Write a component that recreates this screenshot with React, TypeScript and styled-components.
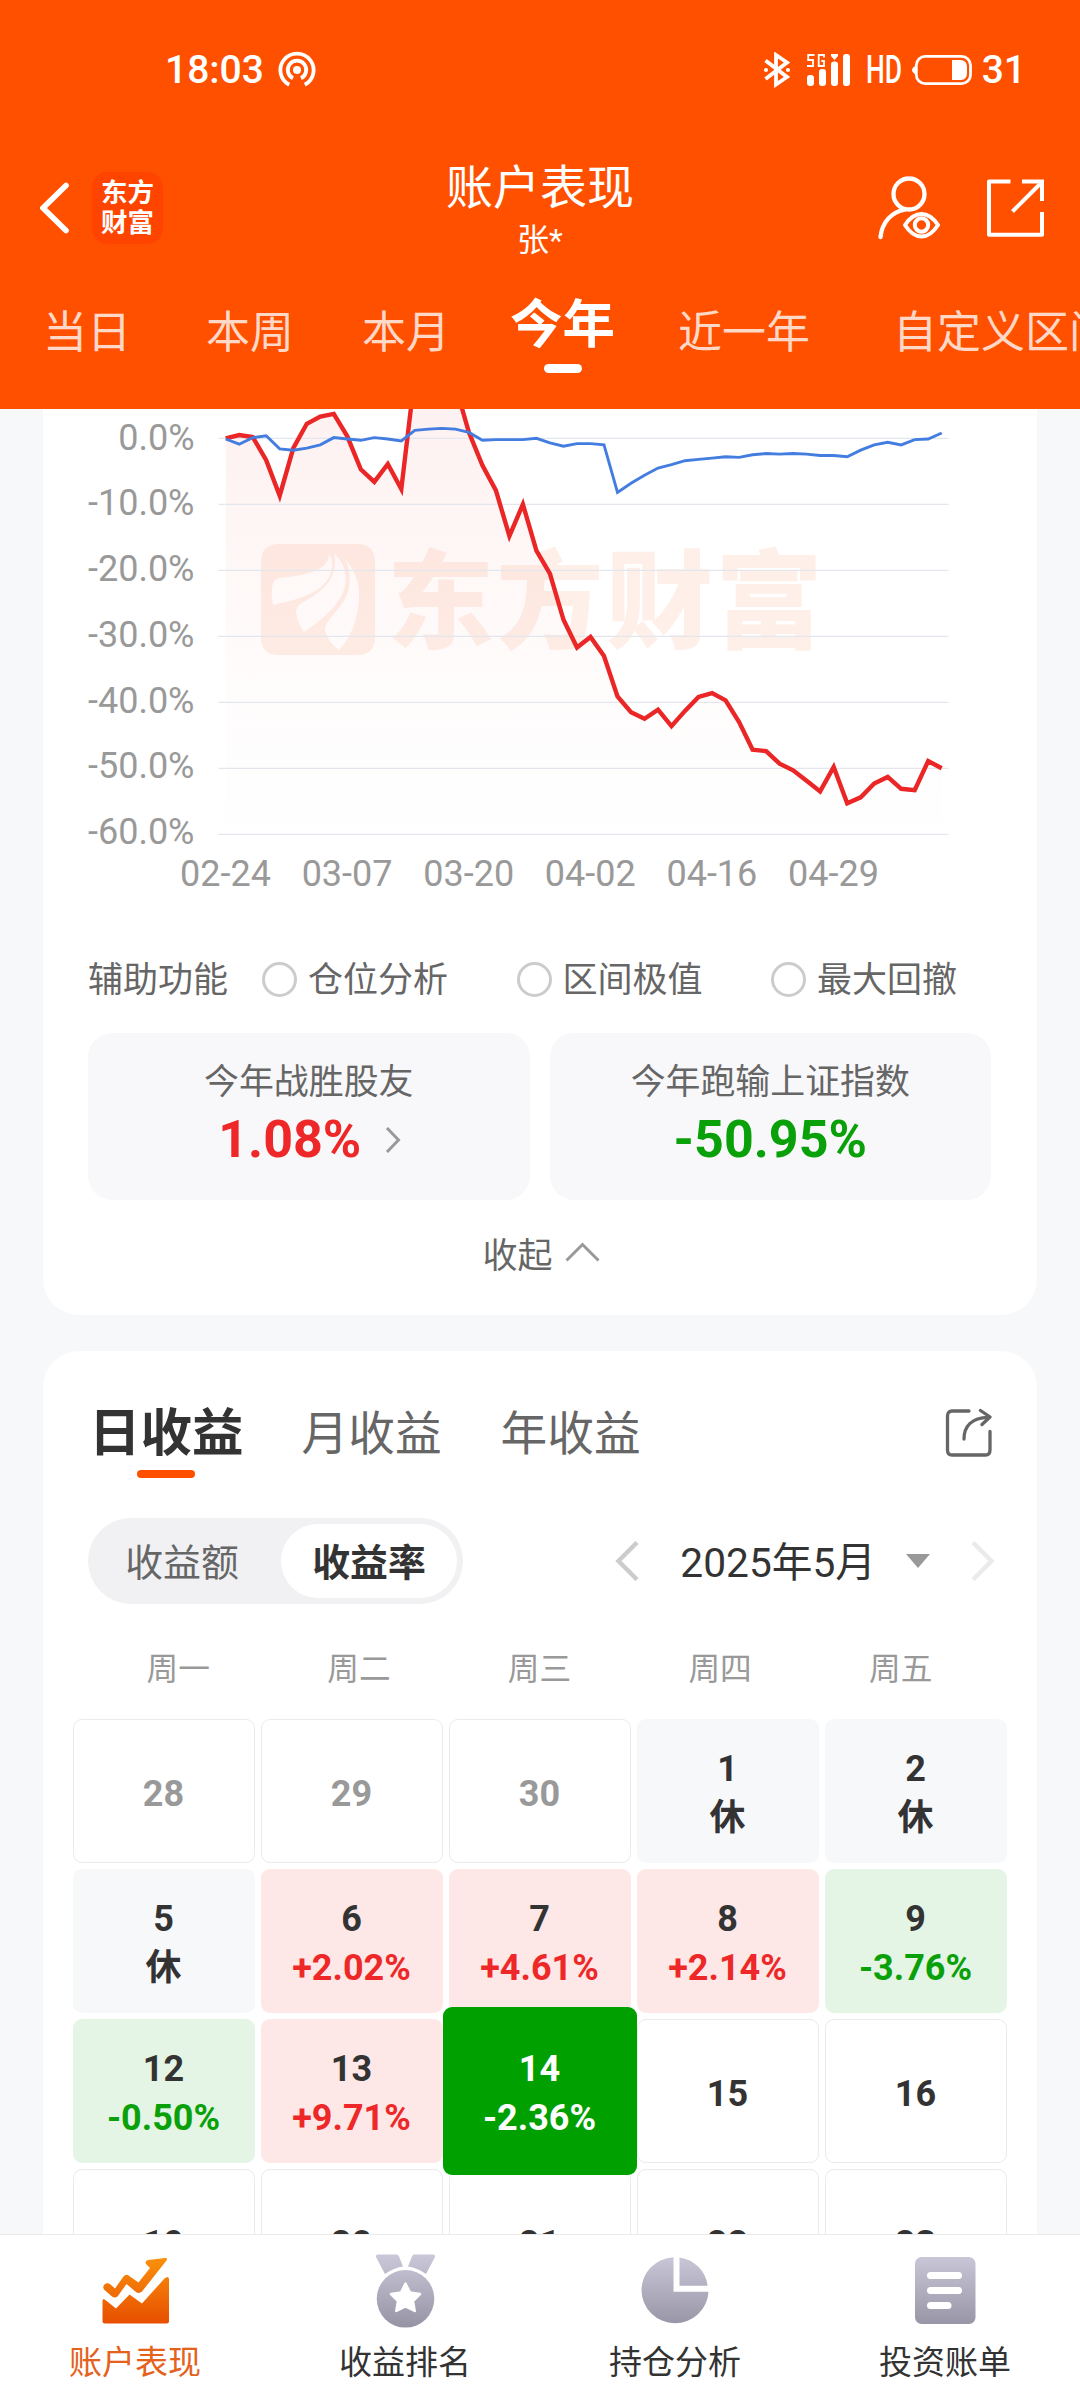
import React from 'react';
import styled, { createGlobalStyle, css } from 'styled-components';

const GlobalStyle = createGlobalStyle`
  * { box-sizing: border-box; }
  body {
    margin: 0;
    background: #f7f8fa;
    font-family: Roboto, "Noto Sans CJK SC", sans-serif;
    color: #333;
  }
`;

const Screen = styled.div`
  width: 1080px;
  height: 2400px;
  display: flex;
  flex-direction: column;
  overflow: hidden;
  background: #f7f8fa;
`;

/* ---------- header ---------- */

const Header = styled.header`
  flex: none;
  height: 409px;
  background: #ff5000;
  color: #fff;
  overflow: hidden;
`;

const StatusBar = styled.div`
  height: 140px;
  padding: 0 54px 0 165px;
  display: flex;
  align-items: center;
  justify-content: space-between;
`;

const StatusGroup = styled.div<{ $gap: number }>`
  display: flex;
  align-items: center;
  gap: ${(p) => p.$gap}px;
`;

const StatusText = styled.span`
  font-size: 39px;
  font-weight: 500;
  line-height: 46px;
`;

const HdText = styled(StatusText)`
  display: inline-block;
  width: 36px;
  white-space: nowrap;
  transform: scaleX(0.68);
  transform-origin: left center;
`;

const TitleBar = styled.div`
  height: 136px;
  padding: 0 36px 0 40px;
  display: grid;
  grid-template-columns: 1fr auto 1fr;
  align-items: center;
`;

const TitleLeft = styled.div`
  display: flex;
  align-items: center;
  gap: 23px;
`;

const BrandBadge = styled.div`
  width: 71px;
  height: 72px;
  border-radius: 15px;
  background: #ff4400;
  display: flex;
  flex-direction: column;
  align-items: center;
  justify-content: center;
  font-size: 26.5px;
  line-height: 30px;
  font-weight: 700;
`;

const TitleCenter = styled.div`
  align-self: start;
  padding-top: 21px;
  margin-left: -4px;
  text-align: center;
`;

const Title = styled.h1`
  margin: 0;
  font-size: 47px;
  font-weight: 400;
  line-height: 54px;
`;

const Subtitle = styled.div`
  font-size: 32px;
  line-height: 50px;
`;

const TitleRight = styled.div`
  display: flex;
  align-items: center;
  justify-content: flex-end;
  gap: 46px;
`;

const RangeTabs = styled.nav`
  display: flex;
  align-items: flex-start;
  padding-left: 43px;
  white-space: nowrap;
`;

const RangeTab = styled.div<{ $gap: number; $active?: boolean }>`
  flex: none;
  margin-left: ${(p) => p.$gap}px;
  padding-top: 27px;
  font-size: 44px;
  line-height: 60px;
  color: rgba(255, 255, 255, 0.78);
  ${(p) =>
    p.$active &&
    css`
      padding-top: 19px;
      font-size: 52.5px;
      font-weight: 700;
      color: #fff;
      &::after {
        content: '';
        display: block;
        width: 38px;
        height: 9px;
        margin: 9px auto 0;
        border-radius: 5px;
        background: #fff;
      }
    `}
`;

/* ---------- cards ---------- */

const Content = styled.main`
  flex: 1;
  min-height: 0;
  overflow: hidden;
  padding: 0 43px;
  display: flex;
  flex-direction: column;
  gap: 36px;
`;

const ChartCard = styled.section`
  flex: none;
  height: 906px;
  background: #fff;
  border-radius: 0 0 36px 36px;
`;

const ChartSvg = styled.svg`
  display: block;
`;

const OptionRow = styled.div`
  height: 60px;
  margin-top: 42px;
  padding-left: 45px;
  display: flex;
  align-items: center;
  font-size: 35px;
  line-height: 60px;
  color: #666;
`;

const OptionLabel = styled.span`
  width: 174px;
`;

const Option = styled.label`
  width: 254.5px;
  display: flex;
  align-items: center;
  gap: 11px;
`;

const RadioRing = styled.i`
  width: 35px;
  height: 35px;
  margin-bottom: 3px;
  border: 3px solid #ccc;
  border-radius: 50%;
`;

const StatRow = styled.div`
  display: grid;
  grid-template-columns: 1fr 1fr;
  gap: 20px;
  padding: 22px 46px 0 45px;
`;

const StatBox = styled.div`
  height: 167px;
  border-radius: 24px;
  background: #f8f8fa;
  padding-top: 25px;
  text-align: center;
`;

const StatLabel = styled.div`
  font-size: 34.9px;
  line-height: 50px;
  color: #666;
`;

const StatValue = styled.div<{ $color: string }>`
  display: flex;
  justify-content: center;
  align-items: center;
  gap: 24px;
  font-size: 52px;
  font-weight: 700;
  line-height: 64px;
  color: ${(p) => p.$color};
`;

const StatChevron = styled.svg`
  margin-right: -2px;
`;

const Collapse = styled.button`
  display: flex;
  align-items: center;
  justify-content: center;
  gap: 12px;
  width: 100%;
  height: 60px;
  margin-top: 22px;
  padding: 0 0 0 2px;
  border: 0;
  background: none;
  font: inherit;
  font-size: 35px;
  color: #666;
`;

/* ---------- calendar ---------- */

const CalendarCard = styled.section`
  flex: none;
  height: 1080px;
  background: #fff;
  border-radius: 36px;
`;

const PeriodRow = styled.div`
  display: flex;
  align-items: flex-start;
  padding: 51px 45px 0 46px;
`;

const PeriodTab = styled.div<{ $active?: boolean }>`
  margin-right: 59px;
  font-size: 46.7px;
  line-height: 64px;
  color: #666;
  ${(p) =>
    p.$active &&
    css`
      margin-right: 58px;
      font-size: 51.5px;
      font-weight: 700;
      color: #333;
      &::after {
        content: '';
        display: block;
        width: 58px;
        height: 8px;
        margin: 4px auto 0;
        border-radius: 4px;
        background: #ff5000;
      }
    `}
`;

const ShareSlot = styled.div`
  margin-left: auto;
  padding-top: 6px;
  line-height: 0;
`;

const ControlRow = styled.div`
  display: flex;
  align-items: center;
  justify-content: space-between;
  padding: 0 42px 0 45px;
  margin-top: 40px;
`;

const Segmented = styled.div`
  width: 375px;
  height: 86px;
  padding: 6px;
  border-radius: 43px;
  background: #f1f1f3;
  display: flex;
`;

const Segment = styled.div<{ $active?: boolean }>`
  width: ${(p) => (p.$active ? 176 : 187)}px;
  height: 74px;
  padding-top: 1px;
  padding-right: ${(p) => (p.$active ? 0 : 11)}px;
  border-radius: 37px;
  text-align: center;
  font-size: 37.9px;
  line-height: 76px;
  font-weight: ${(p) => (p.$active ? 700 : 400)};
  color: ${(p) => (p.$active ? '#333' : '#666')};
  background: ${(p) => (p.$active ? '#fff' : 'transparent')};
`;

const MonthPicker = styled.div`
  display: flex;
  align-items: center;
`;

const MonthText = styled.span`
  margin: 4px 30px 0 41px;
  font-size: 40.7px;
  line-height: 60px;
`;

const DropArrow = styled.svg`
  margin-right: 41px;
`;

const WeekRow = styled.div`
  display: grid;
  grid-template-columns: repeat(5, 1fr);
  padding: 0 46px 0 45px;
  margin-top: 42px;
  text-align: center;
  font-size: 31.7px;
  line-height: 48px;
  color: #999;
`;

const DayGrid = styled.div`
  display: grid;
  grid-template-columns: repeat(5, 182px);
  grid-auto-rows: 144px;
  gap: 6px;
  margin: 25px 0 0 30px;
`;

type Tone = 'plain' | 'muted' | 'rest' | 'up' | 'down' | 'selected';

const toneStyle: Record<Tone, ReturnType<typeof css>> = {
  plain: css`border: 1px solid #ebebeb;`,
  muted: css`border: 1px solid #ebebeb; color: #999;`,
  rest: css`background: #f7f8fa;`,
  up: css`background: #fde8e7;`,
  down: css`background: #e4f4e5;`,
  selected: css`
    z-index: 1;
    margin: -12px -6px;
    background: #00a000;
    color: #fff;
  `,
};

const DayCell = styled.div<{ $tone: Tone }>`
  border-radius: 9px;
  display: flex;
  flex-direction: column;
  align-items: center;
  justify-content: center;
  padding: 6px 1px 0 0;
  font-size: 36px;
  font-weight: 700;
  line-height: 49px;
  ${(p) => toneStyle[p.$tone]}
`;

const DayNote = styled.span<{ $tone: Tone }>`
  color: ${(p) => (p.$tone === 'up' ? '#ee2828' : p.$tone === 'down' ? '#09a009' : 'inherit')};
`;

/* ---------- bottom navigation ---------- */

const BottomNav = styled.nav`
  flex: none;
  height: 166px;
  border-top: 1px solid #ebebeb;
  background: #fff;
  display: grid;
  grid-template-columns: repeat(4, 1fr);
`;

const NavItem = styled.div<{ $active?: boolean }>`
  display: flex;
  flex-direction: column;
  align-items: center;
  padding-top: 15px;
  font-size: 33px;
  line-height: 48px;
  color: ${(p) => (p.$active ? '#e4621c' : '#333')};
  svg { margin-bottom: 11px; }
`;

/* ---------- icons ---------- */

const HotspotIcon = () => (
  <svg width="38" height="38" viewBox="0 0 38 38" fill="none" stroke="#fff" strokeWidth="3.8">
    <circle cx="19" cy="19" r="4" fill="#fff" stroke="none" />
    <path d="M15 27.2A9.2 9.2 0 1 1 23 27.2" />
    <path d="M11.2 33.8A16.6 16.6 0 1 1 26.8 33.8" />
  </svg>
);

const BluetoothIcon = () => (
  <svg width="28" height="36" viewBox="0 0 28 36" fill="none" stroke="#fff" strokeWidth="3.8">
    <path d="M2.5 8.5 L24 25 L13 32.5 V3 L24 10.5 L2.5 27" />
    <circle cx="3" cy="18" r="2.1" fill="#fff" stroke="none" />
    <circle cx="25" cy="18" r="2.1" fill="#fff" stroke="none" />
  </svg>
);

const SignalIcon = () => (
  <svg width="45" height="36" viewBox="0 0 45 36" fill="#fff">
    <path d="M8.5 3 H2.2 V8 H7 V14 H1" fill="none" stroke="#fff" strokeWidth="1.8" />
    <path d="M18 5.5 V3 H12.7 V14 H18 V9 H15.3" fill="none" stroke="#fff" strokeWidth="1.8" />
    <rect x="1" y="23" width="7" height="11" rx="3" />
    <rect x="13" y="17" width="7" height="17" rx="3" />
    <rect x="25" y="9.5" width="7" height="24.5" rx="3" />
    <path d="M25 2 H32 V4 L28.5 8 L25 4 Z" />
    <rect x="37" y="2" width="7" height="32" rx="3" />
  </svg>
);

const BatteryIcon = () => (
  <svg width="60" height="32" viewBox="0 0 60 32" fill="none">
    <rect x="4.3" y="2.3" width="54.2" height="27.4" rx="9" stroke="#fff" strokeWidth="2.8" />
    <path d="M4 11.5 C1 13 0 14.5 0 16 C0 17.5 1 19 4 20.5 Z" fill="#fff" />
    <path d="M40 6 H49 Q55 6.5 55 13 V19 Q55 25.5 49 26 H40 Z" fill="#fff" />
  </svg>
);

const BackIcon = () => (
  <svg width="29" height="52" viewBox="0 0 29 52" fill="none" stroke="#fff" strokeWidth="5.6" strokeLinecap="round">
    <path d="M26 3.5 L3 26 L26 48.5" />
  </svg>
);

const AccountEyeIcon = () => (
  <svg width="63" height="64" viewBox="0 0 63 64" fill="none" stroke="#fff" strokeWidth="4.3" strokeLinecap="round">
    <circle cx="31" cy="18" r="15.5" />
    <path d="M2.5 61 C4 46 14 35.5 27 33.5" />
    <path
      d="M27 49 C32 41.5 37 38 43.5 38 C50 38 55 41.5 60 49 C55 57 50 60.5 43.5 60.5 C37 60.5 32 57 27 49 Z"
      strokeWidth="4"
      strokeLinejoin="round"
    />
    <circle cx="43.5" cy="49" r="6.7" strokeWidth="4" />
  </svg>
);

const OpenIcon = () => (
  <svg width="57" height="58" viewBox="0 0 57 58" fill="none" stroke="#fff" strokeWidth="4" strokeLinejoin="round">
    <path d="M23.5 2.5 H2 V55.7 H55 V33" />
    <path d="M35 2.5 H55 V22" strokeLinejoin="miter" />
    <path d="M54 4 L25.5 32.5" />
  </svg>
);

const ShareIcon = () => (
  <svg width="47" height="49" viewBox="0 0 47 49" fill="none" stroke="#666" strokeWidth="3.3" strokeLinecap="round" strokeLinejoin="round">
    <path d="M24 3 H7 Q2.5 3 2.5 8 V42 Q2.5 47 7 47 H40.5 Q45 47 45 42 V23.5" />
    <path d="M19 31 C19 18 27 9.5 43 9.3" />
    <path d="M35.5 2.5 L45 9 L37 16.5" />
  </svg>
);

const PerformanceIcon = () => (
  <svg width="75" height="78" viewBox="0 0 75 78">
    <defs>
      <linearGradient id="perf" gradientUnits="userSpaceOnUse" x1="0" y1="6" x2="0" y2="72">
        <stop offset="0" stopColor="#fb930c" />
        <stop offset="1" stopColor="#e85000" />
      </linearGradient>
    </defs>
    <path
      d="M4.5 51.5 Q4.5 47 8 50.5 L18 58.5 L31.5 44.5 L44 53.5 L66.5 28.5 Q71 25 71 29.5 V71 Q71 73.5 68.5 73.5 H7 Q4.5 73.5 4.5 71 Z"
      fill="url(#perf)"
    />
    <path
      d="M6 39.5 C3.5 36 8 31 12.5 34.5 L17 38.5 L25.5 26.5 Q28.5 23 32 26.5 L40.5 32.5 L52 18 L48 14 Q46.5 11 50 10 L67 8 Q70 7.5 68.5 10.5 L44 41.5 Q41 44 38 42 L28.5 34 L19.5 46.5 Q16.5 48.5 14 46.5 Z"
      fill="url(#perf)"
    />
  </svg>
);

const GreyGradient = ({ id }: { id: string }) => (
  <defs>
    <linearGradient id={id} gradientUnits="userSpaceOnUse" x1="0" y1="4" x2="0" y2="76">
      <stop offset="0" stopColor="#cac8d9" />
      <stop offset="1" stopColor="#9794a6" />
    </linearGradient>
  </defs>
);

const MedalIcon = () => (
  <svg width="60" height="78" viewBox="0 0 60 78" fill="url(#medal)">
    <GreyGradient id="medal" />
    <path d="M3 4.5 H21.5 Q23 4.5 24 6.5 L28 16.5 Q18 18 10 24 L1 7 Q0.5 4.5 3 4.5 Z" />
    <path d="M57.5 4.5 H39 Q38 4.5 37 6.5 L33 16.5 Q43 18 51 24 L60 7 Q60.5 4.5 57.500 4.5 Z" />
    <circle cx="30.5" cy="48.8" r="28.8" />
    <path
      d="M30.5 33.5 L35 42.5 L45 44 L38 51 L39.7 61 L30.5 56.5 L21.3 61 L23 51 L16 44 L26 42.5 Z"
      fill="#fff"
      stroke="#fff"
      strokeWidth="2.5"
      strokeLinejoin="round"
    />
  </svg>
);

const PieIcon = () => (
  <svg width="68" height="78" viewBox="0 0 68 78" fill="url(#pie)">
    <GreyGradient id="pie" />
    <path d="M32.5 7.2 V41.7 H67.5 A33.5 33 0 1 1 32.5 7.2 Z" />
    <path d="M38.5 7.4 A33 33 0 0 1 66.7 35.7 H38.5 Z" />
  </svg>
);

const BillIcon = () => (
  <svg width="62" height="78" viewBox="0 0 62 78">
    <GreyGradient id="bill" />
    <rect x="1" y="7" width="60.5" height="67" rx="6.5" fill="url(#bill)" />
    <g fill="#fff">
      <rect x="13" y="22" width="35" height="7" rx="3.5" />
      <rect x="13" y="37" width="35" height="7" rx="3.5" />
      <rect x="13" y="52" width="24.5" height="7" rx="3.5" />
    </g>
  </svg>
);

const Chevron = ({ w, h, d, color, sw }: { w: number; h: number; d: string; color: string; sw: number }) => (
  <svg width={w} height={h} viewBox={`0 0 ${w} ${h}`} fill="none" stroke={color} strokeWidth={sw}>
    <path d={d} />
  </svg>
);

/* ---------- chart ---------- */

const ZERO_Y = 29.3;
const STEP_Y = 66;
const START_X = 182.7;
const STEP_X = 13.51;

const account = [
  0, 0.5, 0.2, -3.3, -8.7, -1.5, 2.2, 3.3, 3.7, 0.3, -4.7, -6.6, -3.9, -7.7, 9.5, 12, 11.5, 8,
  0.9, -4.1, -7.9, -14.8, -10, -17, -20.5, -27.5, -31.7, -30.1, -33, -39.1, -41.5,
  -42.5, -41.1, -43.6, -41.3, -39.2, -38.6, -39.7, -43, -47.2, -47.4, -49.3,
  -50.3, -51.9, -53.5, -49.8, -55.3, -54.4, -52.3, -51.3, -53.1, -53.3,
  -48.9, -50,
];

const index = [
  -0.1, -0.9, 0.1, 0.4, -1.6, -1.8, -1.5, -1, 0.1, -0.1, -0.3, 0.1, -0.1, -0.4, 1.2, 1.4, 1.5, 1.4,
  0.9, -0.3, -0.2, -0.2, -0.2, 0, -0.7, -1.2, -0.8, -0.8, -1, -8.2, -6.8, -5.6, -4.5, -4, -3.4,
  -3.2, -3, -2.8, -2.9, -2.5, -2.3, -2.4, -2.3, -2.4, -2.6, -2.6, -2.8,
  -1.8, -1, -0.6, -1, -0.2, -0.1, 0.8,
];

const toPoints = (values: number[]) =>
  values.map((v, i) => `${(START_X + i * STEP_X).toFixed(1)},${(ZERO_Y - v * (STEP_Y / 10)).toFixed(1)}`).join(' ');

const yLabels = [
  { text: '0.0%', y: 41 },
  { text: '-10.0%', y: 106 },
  { text: '-20.0%', y: 172 },
  { text: '-30.0%', y: 238 },
  { text: '-40.0%', y: 304 },
  { text: '-50.0%', y: 369 },
  { text: '-60.0%', y: 435 },
];
const xLabels = ['02-24', '03-07', '03-20', '04-02', '04-16', '04-29'];

const PerformanceChart = () => (
  <ChartSvg width="994" height="500" viewBox="0 0 994 500">
    <defs>
      <linearGradient id="area" gradientUnits="userSpaceOnUse" x1="0" y1="-60" x2="0" y2="420">
        <stop offset="0" stopColor="#ee2828" stopOpacity="0.075" />
        <stop offset="0.25" stopColor="#ee2828" stopOpacity="0.055" />
        <stop offset="0.75" stopColor="#f06040" stopOpacity="0.014" />
        <stop offset="1" stopColor="#888" stopOpacity="0.006" />
      </linearGradient>
    </defs>
    <polygon
      points={`${START_X},420 ${toPoints(account)} ${START_X + 53 * STEP_X},420`}
      fill="url(#area)"
    />
    <g fill="#f26a32" fillOpacity="0.11">
      <path
        fillRule="evenodd"
        d="M236 135 H314 Q332 135 332 153 V228 Q332 246 314 246 H236 Q218 246 218 228 V153 Q218 135 236 135 Z
           M286 145 C286 158 272 166 236 169 Q230 170 229 178 Q228 187 230 196 C256 190 284 184 289 160 Q290 150 286 145 Z
           M291 144 C295 160 289 178 262 192 Q254 196 253 203 Q254 213 261 223 C286 206 302 190 303 170 Q302 154 291 144 Z
           M299 147 Q309 158 306 178 C302 200 282 209 282 221 Q284 232 296 241 C310 226 317 204 316 180 Q313 160 299 147 Z"
      />
      <text x="344" y="231" fontSize="107" fontWeight="900" letterSpacing="2.5" fontFamily='"Noto Sans CJK SC", sans-serif'>
        东方财富
      </text>
    </g>
    {yLabels.map((label, i) => (
      <g key={label.text}>
        <line x1="175.5" x2="905.5" y1={ZERO_Y + i * STEP_Y} y2={ZERO_Y + i * STEP_Y} stroke="#e4e6ee" strokeWidth="1.3" />
        <text x="151.5" y={label.y} fontSize="36" textAnchor="end" fill="#999">
          {label.text}
        </text>
      </g>
    ))}
    {xLabels.map((label, i) => (
      <text key={label} x={182.5 + i * 121.6} y="477" fontSize="36" textAnchor="middle" fill="#999">
        {label}
      </text>
    ))}
    <polyline points={toPoints(account)} fill="none" stroke="#ea2626" strokeWidth="4.4" />
    <polyline points={toPoints(index)} fill="none" stroke="#447de0" strokeWidth="2.9" />
  </ChartSvg>
);

/* ---------- data ---------- */

const ranges = [
  { label: '当日', gap: 0 },
  { label: '本周', gap: 75 },
  { label: '本月', gap: 68 },
  { label: '今年', gap: 60, active: true },
  { label: '近一年', gap: 63 },
  { label: '自定义区间', gap: 83 },
];

const days: { day: string; note?: string; tone: Tone }[] = [
  { day: '28', tone: 'muted' },
  { day: '29', tone: 'muted' },
  { day: '30', tone: 'muted' },
  { day: '1', note: '休', tone: 'rest' },
  { day: '2', note: '休', tone: 'rest' },
  { day: '5', note: '休', tone: 'rest' },
  { day: '6', note: '+2.02%', tone: 'up' },
  { day: '7', note: '+4.61%', tone: 'up' },
  { day: '8', note: '+2.14%', tone: 'up' },
  { day: '9', note: '-3.76%', tone: 'down' },
  { day: '12', note: '-0.50%', tone: 'down' },
  { day: '13', note: '+9.71%', tone: 'up' },
  { day: '14', note: '-2.36%', tone: 'selected' },
  { day: '15', tone: 'plain' },
  { day: '16', tone: 'plain' },
  { day: '19', tone: 'plain' },
  { day: '20', tone: 'plain' },
  { day: '21', tone: 'plain' },
  { day: '22', tone: 'plain' },
  { day: '23', tone: 'plain' },
];

export default function App() {
  return (
    <Screen>
      <GlobalStyle />
      <Header>
        <StatusBar>
          <StatusGroup $gap={14}>
            <StatusText>18:03</StatusText>
            <HotspotIcon />
          </StatusGroup>
          <StatusGroup $gap={10}>
            <StatusGroup $gap={15}>
              <BluetoothIcon />
              <SignalIcon />
              <HdText>HD</HdText>
            </StatusGroup>
            <BatteryIcon />
            <StatusText>31</StatusText>
          </StatusGroup>
        </StatusBar>
        <TitleBar>
          <TitleLeft>
            <BackIcon />
            <BrandBadge>
              <span>东方</span>
              <span>财富</span>
            </BrandBadge>
          </TitleLeft>
          <TitleCenter>
            <Title>账户表现</Title>
            <Subtitle>张*</Subtitle>
          </TitleCenter>
          <TitleRight>
            <AccountEyeIcon />
            <OpenIcon />
          </TitleRight>
        </TitleBar>
        <RangeTabs>
          {ranges.map((r) => (
            <RangeTab key={r.label} $gap={r.gap} $active={r.active}>
              {r.label}
            </RangeTab>
          ))}
        </RangeTabs>
      </Header>

      <Content>
        <ChartCard>
          <PerformanceChart />
          <OptionRow>
            <OptionLabel>辅助功能</OptionLabel>
            {['仓位分析', '区间极值', '最大回撤'].map((t) => (
              <Option key={t}>
                <RadioRing />
                {t}
              </Option>
            ))}
          </OptionRow>
          <StatRow>
            <StatBox>
              <StatLabel>今年战胜股友</StatLabel>
              <StatValue $color="#ee2828">
                1.08%
                <StatChevron width="16" height="28" viewBox="0 0 16 28" fill="none" stroke="#999" strokeWidth="3">
                  <path d="M2 2 L13.5 14 L2 26" />
                </StatChevron>
              </StatValue>
            </StatBox>
            <StatBox>
              <StatLabel>今年跑输上证指数</StatLabel>
              <StatValue $color="#09a009">-50.95%</StatValue>
            </StatBox>
          </StatRow>
          <Collapse>
            收起
            <Chevron w={35} h={20} d="M1.5 18.5 L17.5 2.5 L33.5 18.5" color="#999" sw={3} />
          </Collapse>
        </ChartCard>

        <CalendarCard>
          <PeriodRow>
            <PeriodTab $active>日收益</PeriodTab>
            <PeriodTab>月收益</PeriodTab>
            <PeriodTab>年收益</PeriodTab>
            <ShareSlot>
              <ShareIcon />
            </ShareSlot>
          </PeriodRow>
          <ControlRow>
            <Segmented>
              <Segment>收益额</Segment>
              <Segment $active>收益率</Segment>
            </Segmented>
            <MonthPicker>
              <Chevron w={24} h={40} d="M22 1.5 L3.5 20 L22 38.5" color="#ccc" sw={4.5} />
              <MonthText>2025年5月</MonthText>
              <DropArrow width="24" height="14" viewBox="0 0 24 14">
                <path d="M0 0 H24 L12 14 Z" fill="#999" />
              </DropArrow>
              <Chevron w={24} h={40} d="M2 1.5 L20.5 20 L2 38.5" color="#ebebeb" sw={4.5} />
            </MonthPicker>
          </ControlRow>
          <WeekRow>
            {['周一', '周二', '周三', '周四', '周五'].map((d) => (
              <span key={d}>{d}</span>
            ))}
          </WeekRow>
          <DayGrid>
            {days.map((d) => (
              <DayCell key={d.day} $tone={d.tone}>
                <span>{d.day}</span>
                {d.note && <DayNote $tone={d.tone}>{d.note}</DayNote>}
              </DayCell>
            ))}
          </DayGrid>
        </CalendarCard>
      </Content>

      <BottomNav>
        <NavItem $active>
          <PerformanceIcon />
          账户表现
        </NavItem>
        <NavItem>
          <MedalIcon />
          收益排名
        </NavItem>
        <NavItem>
          <PieIcon />
          持仓分析
        </NavItem>
        <NavItem>
          <BillIcon />
          投资账单
        </NavItem>
      </BottomNav>
    </Screen>
  );
}
